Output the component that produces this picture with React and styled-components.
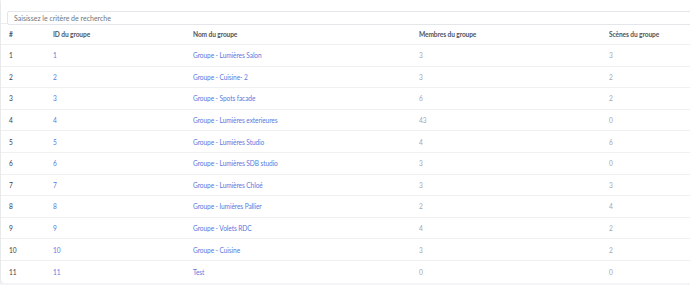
import React from "react";
import styled, { createGlobalStyle } from "styled-components";

const Global = createGlobalStyle`
  html, body { margin: 0; padding: 0; background: #f3f4f6; overflow: hidden; }
  body { font-family: Lato, "Open Sans", "Noto Sans", sans-serif; }
`;

const Page = styled.div`
  padding: 0 0 0 1px;
  width: 720px;
`;

const Card = styled.div`
  background: #ffffff;
  border-radius: 0 0 3px 3px;
  box-shadow: 0 1px 3px rgba(0, 0, 0, 0.12);
  padding-top: 5px;
`;

const SearchBar = styled.div`
  padding: 0 0 0 6px;
  height: 18px;
  border-bottom: 1px solid #eceef1;
`;

const SearchInput = styled.input`
  box-sizing: border-box;
  width: 100%;
  height: 14px;
  border: 1px solid #e4e6ea;
  border-radius: 2px;
  padding: 0 0 0 6px;
  font-family: Lato, "Open Sans", sans-serif;
  font-size: 7px;
  color: #555;
  outline: none;
  &::placeholder { color: #70757d; }
`;

const Grid = styled.div`
  display: grid;
  grid-template-columns: 44px 140px 226px 190px 1fr;
  padding-left: 8px;
  align-items: center;
  height: ${(p) => p.$h}px;
  border-bottom: ${(p) => (p.$last ? "none" : "1px solid #eef0f2")};
  box-sizing: border-box;
`;

const Cell = styled.div`
  font-size: 6.6px;
  letter-spacing: -0.1px;
  white-space: nowrap;
  color: ${(p) =>
    p.$kind === "head" ? "#50555d" : p.$kind === "idx" ? "#3a3d42" : p.$kind === "link" ? "#5b78e0" : "#a3a7ad"};
  font-weight: ${(p) => (p.$kind === "head" ? 700 : 400)};
`;

const rows = [
  [1, "Groupe - Lumières Salon", 3, 3],
  [2, "Groupe - Cuisine- 2", 3, 2],
  [3, "Groupe - Spots facade", 6, 2],
  [4, "Groupe - Lumières exterieures", 43, 0],
  [5, "Groupe - Lumières Studio", 4, 6],
  [6, "Groupe - Lumières SDB studio", 3, 0],
  [7, "Groupe - Lumières Chloé", 3, 3],
  [8, "Groupe - lumières Pallier", 2, 4],
  [9, "Groupe - Volets RDC", 4, 2],
  [10, "Groupe - Cuisine", 3, 2],
  [11, "Test", 0, 0],
];

export default function App() {
  return (
    <Page>
      <Global />
      <Card>
        <SearchBar>
          <SearchInput placeholder="Saisissez le critère de recherche" />
        </SearchBar>
        <Grid $h={21}>
          <Cell $kind="head">#</Cell>
          <Cell $kind="head">ID du groupe</Cell>
          <Cell $kind="head">Nom du groupe</Cell>
          <Cell $kind="head">Membres du groupe</Cell>
          <Cell $kind="head">Scènes du groupe</Cell>
        </Grid>
        {rows.map(([id, name, m, s], i) => (
          <Grid key={id} $h={21.6} $last={i === rows.length - 1}>
            <Cell $kind="idx">{id}</Cell>
            <Cell $kind="link">{id}</Cell>
            <Cell $kind="link">{name}</Cell>
            <Cell>{m}</Cell>
            <Cell>{s}</Cell>
          </Grid>
        ))}
      </Card>
    </Page>
  );
}
